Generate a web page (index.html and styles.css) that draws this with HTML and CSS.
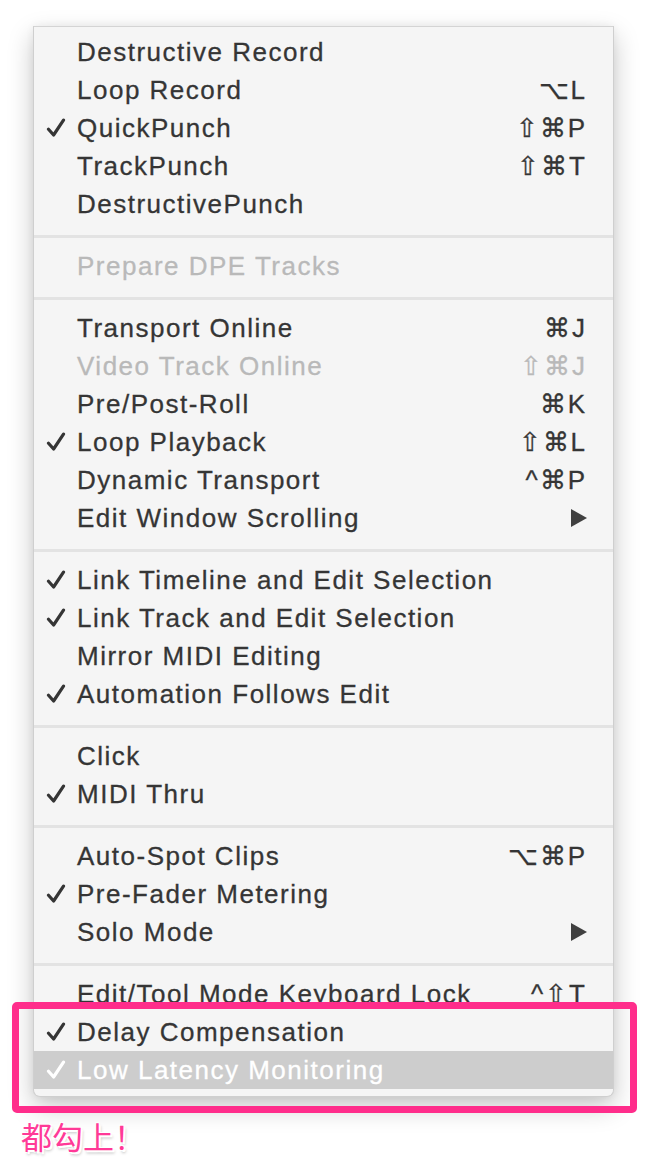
FILE: index.html
```html
<!DOCTYPE html>
<html>
<head>
<meta charset="utf-8">
<link rel="stylesheet" href="styles.css">
</head>
<body>
<div class="page">
  <div class="menu">
    <div class="item"><span class="chk"></span><span class="label">Destructive Record</span><span class="key"></span></div>
    <div class="item"><span class="chk"></span><span class="label">Loop Record</span><span class="key">⌥L</span></div>
    <div class="item"><span class="chk on"><svg viewBox="0 0 20 20"><path d="M2.5 11.2 L7.6 17 L17.5 2.2"/></svg></span><span class="label">QuickPunch</span><span class="key">⇧⌘P</span></div>
    <div class="item"><span class="chk"></span><span class="label">TrackPunch</span><span class="key">⇧⌘T</span></div>
    <div class="item"><span class="chk"></span><span class="label">DestructivePunch</span><span class="key"></span></div>
    <div class="sep"></div>
    <div class="item disabled"><span class="chk"></span><span class="label">Prepare DPE Tracks</span><span class="key"></span></div>
    <div class="sep"></div>
    <div class="item"><span class="chk"></span><span class="label">Transport Online</span><span class="key">⌘J</span></div>
    <div class="item disabled"><span class="chk"></span><span class="label">Video Track Online</span><span class="key">⇧⌘J</span></div>
    <div class="item"><span class="chk"></span><span class="label">Pre/Post-Roll</span><span class="key">⌘K</span></div>
    <div class="item"><span class="chk on"><svg viewBox="0 0 20 20"><path d="M2.5 11.2 L7.6 17 L17.5 2.2"/></svg></span><span class="label">Loop Playback</span><span class="key">⇧⌘L</span></div>
    <div class="item"><span class="chk"></span><span class="label">Dynamic Transport</span><span class="key">^⌘P</span></div>
    <div class="item"><span class="chk"></span><span class="label">Edit Window Scrolling</span><span class="key"><span class="arrow"></span></span></div>
    <div class="sep"></div>
    <div class="item"><span class="chk on"><svg viewBox="0 0 20 20"><path d="M2.5 11.2 L7.6 17 L17.5 2.2"/></svg></span><span class="label">Link Timeline and Edit Selection</span><span class="key"></span></div>
    <div class="item"><span class="chk on"><svg viewBox="0 0 20 20"><path d="M2.5 11.2 L7.6 17 L17.5 2.2"/></svg></span><span class="label">Link Track and Edit Selection</span><span class="key"></span></div>
    <div class="item"><span class="chk"></span><span class="label">Mirror MIDI Editing</span><span class="key"></span></div>
    <div class="item"><span class="chk on"><svg viewBox="0 0 20 20"><path d="M2.5 11.2 L7.6 17 L17.5 2.2"/></svg></span><span class="label">Automation Follows Edit</span><span class="key"></span></div>
    <div class="sep"></div>
    <div class="item"><span class="chk"></span><span class="label">Click</span><span class="key"></span></div>
    <div class="item"><span class="chk on"><svg viewBox="0 0 20 20"><path d="M2.5 11.2 L7.6 17 L17.5 2.2"/></svg></span><span class="label">MIDI Thru</span><span class="key"></span></div>
    <div class="sep"></div>
    <div class="item"><span class="chk"></span><span class="label">Auto-Spot Clips</span><span class="key">⌥⌘P</span></div>
    <div class="item"><span class="chk on"><svg viewBox="0 0 20 20"><path d="M2.5 11.2 L7.6 17 L17.5 2.2"/></svg></span><span class="label">Pre-Fader Metering</span><span class="key"></span></div>
    <div class="item"><span class="chk"></span><span class="label">Solo Mode</span><span class="key"><span class="arrow"></span></span></div>
    <div class="sep"></div>
    <div class="item"><span class="chk"></span><span class="label">Edit/Tool Mode Keyboard Lock</span><span class="key">^⇧T</span></div>
    <div class="item"><span class="chk on"><svg viewBox="0 0 20 20"><path d="M2.5 11.2 L7.6 17 L17.5 2.2"/></svg></span><span class="label">Delay Compensation</span><span class="key"></span></div>
    <div class="item selected"><span class="chk on"><svg viewBox="0 0 20 20"><path d="M2.5 11.2 L7.6 17 L17.5 2.2"/></svg></span><span class="label">Low Latency Monitoring</span><span class="key"></span></div>
  </div>
  <div class="highlight-box"></div>
  <div class="note">都勾上！</div>
</div>
</body>
</html>
```
FILE: styles.css
```css
html, body {
  margin: 0;
  padding: 0;
  background: #ffffff;
}
.page {
  position: relative;
  width: 648px;
  height: 1159px;
  overflow: hidden;
  padding-top: 26px;
  box-sizing: border-box;
}
.menu {
  margin-left: 33px;
  width: 581px;
  box-sizing: border-box;
  background: #f5f5f5;
  border: 1px solid #cfcfcf;
  border-top-color: #d4d4d4;
  border-radius: 0 0 7px 7px;
  padding: 6px 0 7px 0;
  box-shadow: 0 10px 26px rgba(0, 0, 0, 0.22), 0 0 8px rgba(0,0,0,0.06);
  font-family: Arial, "Liberation Sans", Helvetica, sans-serif;
  font-size: 26px;
  letter-spacing: 1.5px;
  color: #353535;
}
.item {
  height: 38px;
  display: flex;
  align-items: center;
  padding-right: 26px;
  white-space: nowrap;
}
.chk {
  width: 43px;
  flex: none;
  display: flex;
  align-items: center;
  padding-left: 12px;
  box-sizing: border-box;
}
.chk svg {
  width: 20px;
  height: 20px;
  fill: none;
  stroke: #353535;
  stroke-width: 3.2;
  stroke-linecap: round;
  stroke-linejoin: round;
}
.label {
  flex: 1;
  -webkit-text-stroke: 0.3px currentColor;
}
.key {
  font-family: Arial, "Liberation Sans", sans-serif;
  font-size: 26px;
  letter-spacing: 2px;
  display: flex;
  align-items: center;
  justify-content: flex-end;
  -webkit-text-stroke: 0.3px currentColor;
}
.sym {
  font-family: "DejaVu Sans", sans-serif;
  font-size: 25px;
}
.arrow {
  width: 0;
  height: 0;
  border-top: 9px solid transparent;
  border-bottom: 9px solid transparent;
  border-left: 16px solid #404040;
}
.disabled {
  color: #b9b9b9;
}
.selected {
  background: #cdcdcd;
  color: #ffffff;
}
.selected .chk svg {
  stroke: #ffffff;
}
.sep {
  height: 3px;
  background: #e3e3e3;
  margin: 12px 0 9px 0;
}
.highlight-box {
  position: absolute;
  left: 12px;
  top: 1002px;
  width: 625px;
  height: 111px;
  box-sizing: border-box;
  border: 7px solid #ff2d8b;
  border-radius: 5px;
}
.note {
  margin: 20px 0 0 21px;
  font-family: "Noto Sans CJK SC", sans-serif;
  font-size: 31px;
  line-height: 38px;
  color: #ff3a97;
  text-shadow: 2px 2px 0 #fff, -1px -1px 0 #fff, 1px -1px 0 #fff, -1px 1px 0 #fff, 2px 3px 3px rgba(0,0,0,0.25);
}
```
